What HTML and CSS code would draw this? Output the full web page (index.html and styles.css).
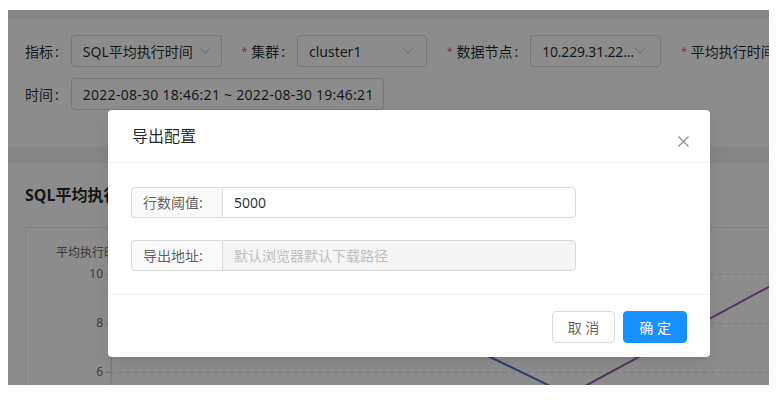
FILE: index.html
```html
<!DOCTYPE html>
<html lang="zh-CN">
<head>
  <meta charset="UTF-8" />
  <title>SQL平均执行时间</title>
  <link rel="stylesheet" href="styles.css">
</head>
<body>
  <div class="frame">
    <div class="page">
      <div class="card filter">
        <div class="filter-row">
          <div class="item">
            <span class="label">指标</span>
            <div class="select sel-metric"><span class="val">SQL平均执行时间</span><svg class="arrow" width="10" height="6" viewBox="0 0 10 6"><path d="M0.5 0.5 L5 5 L9.5 0.5" fill="none" stroke="#bfbfbf" stroke-width="1"/></svg></div>
          </div>
          <div class="item">
            <span class="label req">集群</span>
            <div class="select sel-cluster"><span class="val">cluster1</span><svg class="arrow" width="10" height="6" viewBox="0 0 10 6"><path d="M0.5 0.5 L5 5 L9.5 0.5" fill="none" stroke="#bfbfbf" stroke-width="1"/></svg></div>
          </div>
          <div class="item">
            <span class="label req">数据节点</span>
            <div class="select sel-node"><span class="val">10.229.31.22...</span><svg class="arrow" width="10" height="6" viewBox="0 0 10 6"><path d="M0.5 0.5 L5 5 L9.5 0.5" fill="none" stroke="#bfbfbf" stroke-width="1"/></svg></div>
          </div>
          <div class="item">
            <span class="label req">平均执行时间</span>
          </div>
        </div>
        <div class="filter-row">
          <div class="item">
            <span class="label">时间</span>
            <div class="select sel-time"><span class="val">2022-08-30 18:46:21 ~ 2022-08-30 19:46:21</span></div>
          </div>
        </div>
      </div>

      <div class="card chart-card">
        <h3 class="chart-title">SQL平均执行时间</h3>
        <div class="chart-box">
          <svg class="chart" width="900" height="200" viewBox="0 0 900 200">
            <text x="30" y="29" class="axis-name">平均执行时间</text>
            <line x1="85" y1="10" x2="85" y2="200" stroke="#d0d0d0" stroke-width="1"/>
            <g stroke="#e0e0e0" stroke-width="1" stroke-dasharray="4 4">
              <line x1="85" y1="46.5" x2="900" y2="46.5"/>
              <line x1="85" y1="95.5" x2="900" y2="95.5"/>
              <line x1="85" y1="144.5" x2="900" y2="144.5"/>
            </g>
            <g stroke="#d0d0d0" stroke-width="1">
              <line x1="80" y1="46.5" x2="85" y2="46.5"/>
              <line x1="80" y1="95.5" x2="85" y2="95.5"/>
              <line x1="80" y1="144.5" x2="85" y2="144.5"/>
            </g>
            <text x="77" y="50" class="tick">10</text>
            <text x="77" y="99" class="tick">8</text>
            <text x="77" y="148" class="tick">6</text>
            <polyline points="380,88 464,129 580,185" fill="none" stroke="#5470c6" stroke-width="2"/>
            <polyline points="530,174 561,157 800,28" fill="none" stroke="#9a60b4" stroke-width="2"/>
          </svg>
        </div>
      </div>
    </div>

    <div class="mask"></div>

    <div class="modal">
      <div class="modal-header">
        <span class="modal-title">导出配置</span>
        <button class="modal-close" aria-label="Close">
          <svg width="11" height="11" viewBox="0 0 11 11"><path d="M0.5 0.5 L10.5 10.5 M10.5 0.5 L0.5 10.5" stroke="#8c8c8c" stroke-width="1.2" fill="none"/></svg>
        </button>
      </div>
      <div class="modal-body">
        <div class="input-group">
          <span class="addon">行数阈值:</span>
          <input class="input" type="text" value="5000">
        </div>
        <div class="input-group">
          <span class="addon">导出地址:</span>
          <input class="input" type="text" placeholder="默认浏览器默认下载路径" disabled>
        </div>
      </div>
      <div class="modal-footer">
        <button class="btn">取 消</button>
        <button class="btn btn-primary">确 定</button>
      </div>
    </div>
  </div>
</body>
</html>
```

FILE: styles.css
```css
* {
  box-sizing: border-box;
}

body {
  margin: 10px 0 0 8px;
  background: #fff;
  font-family: "Noto Sans", "Noto Sans CJK SC", sans-serif;
  font-size: 14px;
  color: rgba(0, 0, 0, 0.85);
}

.frame {
  position: relative;
  width: 761px;
  height: 375px;
  overflow: hidden;
  background: #f0f2f5;
}

.page {
  width: 1100px;
  padding-top: 9px;
}

.card {
  background: #fff;
}

.filter {
  height: 127px;
  margin-bottom: 17px;
  padding: 16px 17px;
}

.filter-row {
  display: flex;
  align-items: center;
  height: 32px;
  margin-bottom: 11px;
  white-space: nowrap;
}

.item {
  display: flex;
  align-items: center;
  margin-right: 20px;
}

.label {
  margin-right: 12px;
}

.label::after {
  content: ":";
  margin-left: 2px;
}

.label.req::before {
  content: "*";
  color: #ff4d4f;
  margin-right: 4px;
  font-family: SimSun, "Liberation Sans", sans-serif;
}

.select {
  display: flex;
  align-items: center;
  justify-content: space-between;
  height: 32px;
  padding: 0 11px;
  border: 1px solid #d9d9d9;
  border-radius: 4px;
  background: #fff;
}

.select .arrow {
  flex: none;
  margin-left: 4px;
}

.sel-metric { width: 151px; }
.sel-cluster { width: 130px; padding-right: 13px; }
.sel-node { width: 131px; padding-right: 8px; justify-content: flex-start; letter-spacing: -0.2px; }
.sel-node .arrow { margin-left: 1px; }
.sel-time { width: 313px; letter-spacing: 0.27px; }

.chart-card {
  height: 300px;
  padding: 20px 17px;
}

.chart-title {
  margin: 0 0 20px;
  font-size: 16px;
  line-height: 24px;
  font-weight: bold;
  color: rgba(0, 0, 0, 0.85);
}

.chart-box {
  border: 1px solid #e8e8e8;
  height: 240px;
}

.chart {
  display: block;
}

.axis-name {
  font-size: 12px;
  fill: #666;
}

.tick {
  font-size: 12px;
  fill: #6e7079;
  text-anchor: end;
}

.mask {
  position: absolute;
  inset: 0;
  background: rgba(0, 0, 0, 0.45);
}

.modal {
  position: absolute;
  left: 100px;
  top: 100px;
  width: 602px;
  background: #fff;
  border-radius: 4px;
  box-shadow: 0 3px 6px -4px rgba(0,0,0,0.12), 0 6px 16px rgba(0,0,0,0.08);
}

.modal-header {
  position: relative;
  padding: 15px 24px;
  border-bottom: 1px solid #f0f0f0;
}

.modal-title {
  font-size: 16px;
  line-height: 22px;
  color: rgba(0, 0, 0, 0.85);
}

.modal-close {
  position: absolute;
  top: 0;
  right: 0;
  width: 54px;
  height: 58px;
  padding: 4px 0 0;
  border: none;
  background: none;
  display: flex;
  align-items: center;
  justify-content: center;
  cursor: pointer;
}

.modal-body {
  padding: 24px 23px 23px;
}

.input-group {
  display: flex;
  width: 445px;
  height: 31px;
  margin-bottom: 22px;
}

.input-group:last-child {
  margin-bottom: 0;
}

.addon {
  width: 91px;
  padding: 0 11px;
  line-height: 29px;
  background: #fafafa;
  border: 1px solid #d9d9d9;
  border-right: none;
  border-radius: 4px 0 0 4px;
  color: rgba(0, 0, 0, 0.65);
}

.input {
  flex: 1;
  min-width: 0;
  padding: 0 11px;
  font: inherit;
  color: rgba(0, 0, 0, 0.85);
  border: 1px solid #d9d9d9;
  border-radius: 0 4px 4px 0;
  background: #fff;
  outline: none;
}

.input:disabled {
  background: #f5f5f5;
}

.input::placeholder {
  color: #bfbfbf;
}

.modal-footer {
  display: flex;
  justify-content: flex-end;
  gap: 8px;
  padding: 16px 23px 14px;
  border-top: 1px solid #f0f0f0;
}

.btn {
  height: 32px;
  padding: 0 15px;
  font: inherit;
  font-size: 14px;
  color: rgba(0, 0, 0, 0.65);
  background: #fff;
  border: 1px solid #d9d9d9;
  border-radius: 4px;
  cursor: pointer;
}

.btn-primary {
  color: #fff;
  background: #1890ff;
  border-color: #1890ff;
}
```
